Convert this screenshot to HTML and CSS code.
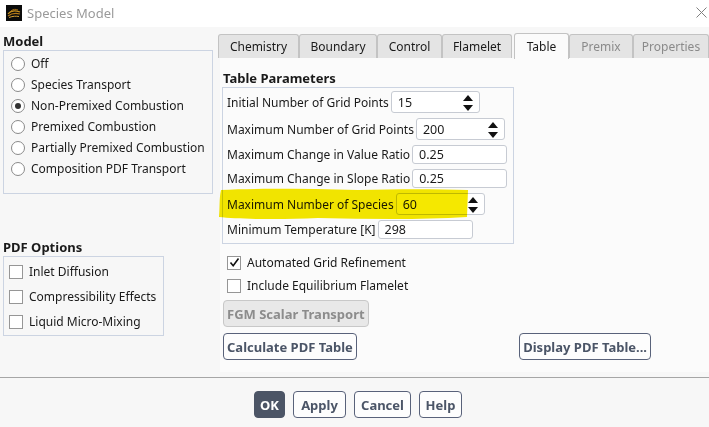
FILE: index.html
```html
<!DOCTYPE html>
<html>
<head>
<meta charset="utf-8">
<title>Species Model</title>
<link rel="stylesheet" href="styles.css">
</head>
<body>
<div class="window">
  <div class="titlebar">
    <svg class="app-icon" width="16" height="16" viewBox="0 0 16 16">
      <rect width="16" height="16" fill="#0b0b0b"/>
      <path d="M2 9 C5 5, 9 5, 14 7" stroke="#c9921f" stroke-width="1.2" fill="none"/>
      <path d="M2 11 C6 8, 10 8, 14 9" stroke="#b57a17" stroke-width="1.2" fill="none"/>
      <path d="M3 12.5 C7 11, 10 11, 13 11.5" stroke="#d4a035" stroke-width="1" fill="none"/>
      <path d="M5 6 C7 4, 10 4, 12 5" stroke="#a66d14" stroke-width="1" fill="none"/>
    </svg>
    <span class="title">Species Model</span>
    <svg class="close" width="11" height="11" viewBox="0 0 11 11">
      <path d="M0.5 0.5 L10.5 10.5 M10.5 0.5 L0.5 10.5" stroke="#808080" stroke-width="1" fill="none"/>
    </svg>
  </div>

  <div class="main">
    <div class="left">
      <div class="group-title">Model</div>
      <div class="box model-box">
        <div class="opt-row"><span class="radio"></span>Off</div>
        <div class="opt-row"><span class="radio"></span>Species Transport</div>
        <div class="opt-row"><span class="radio checked"></span>Non-Premixed Combustion</div>
        <div class="opt-row"><span class="radio"></span>Premixed Combustion</div>
        <div class="opt-row"><span class="radio"></span>Partially Premixed Combustion</div>
        <div class="opt-row"><span class="radio"></span>Composition PDF Transport</div>
      </div>
      <div class="group-title pdf-title">PDF Options</div>
      <div class="box pdf-box">
        <div class="chk-row"><span class="check"></span>Inlet Diffusion</div>
        <div class="chk-row"><span class="check"></span>Compressibility Effects</div>
        <div class="chk-row"><span class="check"></span>Liquid Micro-Mixing</div>
      </div>
    </div>

    <div class="right">
      <div class="tabs">
        <div class="tab t-chem">Chemistry</div>
        <div class="tab t-bound">Boundary</div>
        <div class="tab t-ctrl">Control</div>
        <div class="tab t-flam">Flamelet</div>
        <div class="tab active t-table">Table</div>
        <div class="tab disabled t-premix">Premix</div>
        <div class="tab disabled t-props">Properties</div>
      </div>
      <div class="panel">
        <div class="group-title params-title">Table Parameters</div>
        <div class="box params">
          <div class="param"><span class="plabel">Initial Number of Grid Points</span><span class="field spin">15<span class="arrows"><span class="up"></span><span class="down"></span></span></span></div>
          <div class="param"><span class="plabel">Maximum Number of Grid Points</span><span class="field spin">200<span class="arrows"><span class="up"></span><span class="down"></span></span></span></div>
          <div class="param"><span class="plabel">Maximum Change in Value Ratio</span><span class="field text">0.25</span></div>
          <div class="param"><span class="plabel">Maximum Change in Slope Ratio</span><span class="field text">0.25</span></div>
          <div class="param"><span class="plabel">Maximum Number of Species</span><span class="field spin">60<span class="arrows"><span class="up"></span><span class="down"></span></span></span></div>
          <div class="param"><span class="plabel">Minimum Temperature [K]</span><span class="field text">298</span></div>
          <svg class="highlight" width="252" height="34" viewBox="0 0 252 34" preserveAspectRatio="none">
            <path d="M3 3 C40 1, 90 2, 140 3 C180 2, 220 2, 250 3 L249 30 C200 33, 150 32, 100 31 C60 33, 20 32, 1 30 C2 20, 1 12, 3 3 Z" fill="#f5e800"/>
          </svg>
        </div>
        <div class="chk-row wide first"><span class="check checked"><svg width="11" height="11" viewBox="0 0 11 11"><path d="M1.5 5.5 L4.2 8.8 L9.5 1.5" stroke="#111" stroke-width="1.6" fill="none"/></svg></span>Automated Grid Refinement</div>
        <div class="chk-row wide"><span class="check"></span>Include Equilibrium Flamelet</div>
        <div class="btn disabled fgm">FGM Scalar Transport</div>
        <div class="btn-row">
          <div class="btn">Calculate PDF Table</div>
          <div class="btn">Display PDF Table...</div>
        </div>
      </div>
    </div>
  </div>

  <div class="footer">
    <div class="btn primary w-ok">OK</div>
    <div class="btn w-apply">Apply</div>
    <div class="btn w-cancel">Cancel</div>
    <div class="btn w-help">Help</div>
  </div>
</div>
</body>
</html>
```

FILE: styles.css
```css
* { box-sizing: border-box; }
html, body { margin: 0; padding: 0; }
body {
  font-family: "Noto Sans", "DejaVu Sans", sans-serif;
  font-size: 12px;
  color: #1a1a1a;
  background: #f7f7f7;
}
.window {
  width: 709px;
  height: 427px;
  display: flex;
  flex-direction: column;
  overflow: hidden;
}
.titlebar {
  height: 27px;
  flex: none;
  background: #ffffff;
  display: flex;
  align-items: center;
  padding-left: 6px;
}
.app-icon { flex: none; margin-top: -2px; }
.title {
  margin-left: 5px;
  font-size: 13px;
  color: #9a9a9a;
  margin-top: -2px;
}
.close { margin-left: auto; margin-right: 2px; margin-top: -2px; }

.main {
  height: 350px;
  flex: none;
  display: flex;
}
.left {
  width: 218px;
  flex: none;
  padding-left: 3px;
}
.group-title {
  font-weight: bold;
  font-size: 13px;
  line-height: 16px;
  height: 16px;
  color: #1a1a1a;
}
.left > .group-title:first-child { margin-top: 6px; margin-bottom: 1px; }
.box {
  border: 1px solid #ccd4e2;
}
.model-box {
  width: 210px;
  height: 144px;
  padding-top: 2px;
}
.opt-row {
  height: 21px;
  display: flex;
  align-items: center;
  white-space: nowrap;
}
.radio {
  width: 14px;
  height: 14px;
  border-radius: 50%;
  border: 1px solid #8a8a8a;
  background: #fff;
  margin-left: 7px;
  margin-right: 6px;
  flex: none;
  position: relative;
}
.radio.checked::after {
  content: "";
  position: absolute;
  left: 3px; top: 3px;
  width: 6px; height: 6px;
  border-radius: 50%;
  background: #333;
}
.pdf-title { margin-top: 45px; margin-bottom: 1px; }
.pdf-box {
  width: 161px;
  height: 80px;
  padding-top: 2px;
}
.chk-row {
  height: 25px;
  display: flex;
  align-items: center;
  white-space: nowrap;
}
.check {
  width: 14px;
  height: 14px;
  border: 1px solid #969696;
  background: #fff;
  margin-left: 5px;
  margin-right: 6px;
  flex: none;
  display: flex;
  align-items: center;
  justify-content: center;
}

.right {
  flex: 1;
  display: flex;
  flex-direction: column;
  padding-top: 6px;
}
.tabs {
  display: flex;
  align-items: flex-end;
  height: 25px;
  flex: none;
  position: relative;
  z-index: 1;
}
.tab {
  height: 24px;
  padding: 0;
  display: flex;
  align-items: center;
  justify-content: center;
  font-size: 12px;
  background: #e4e4e4;
  border: 1px solid #c3c3c3;
  border-bottom: none;
  border-radius: 3px 3px 0 0;
  white-space: nowrap;
  color: #1a1a1a;
  flex: none;
}
.t-chem { width: 81px; }
.t-bound { width: 78px; }
.t-ctrl { width: 65px; }
.t-flam { width: 70px; }
.t-table { width: 55px; }
.t-premix { width: 64px; }
.t-props { width: 76px; }
.tab.active {
  height: 26px;
  background: #fbfbfb;
  margin-left: 2px;
  margin-bottom: -1px;
}
.tab.disabled { color: #8a8a8a; }
.panel {
  margin-left: 2px;
  height: 314px;
  background: #fbfbfb;
  padding: 12px 0 0 2px;
}
.params-title { padding-left: 1px; }
.params {
  position: relative;
  width: 292px;
  height: 157px;
  margin-top: 1px;
  padding: 3px 0 0 4px;
  display: flex;
  flex-direction: column;
  gap: 5px;
}
.param {
  display: flex;
  align-items: center;
  white-space: nowrap;
  position: relative;
  z-index: 1;
}
.plabel { margin-right: 2px; }
.field {
  background: #fff;
  border: 1px solid #c7cbd3;
  border-radius: 3px;
  display: flex;
  align-items: center;
  padding-left: 6px;
  font-size: 12.5px;
}
.field.spin { width: 89px; height: 22px; position: relative; }
.field.text { width: 95px; height: 19px; }
.arrows {
  position: absolute;
  right: 6px;
  top: 3px;
  display: flex;
  flex-direction: column;
  gap: 4px;
}
.arrows .up {
  width: 0; height: 0;
  border-left: 5px solid transparent;
  border-right: 5px solid transparent;
  border-bottom: 6px solid #111;
}
.arrows .down {
  width: 0; height: 0;
  border-left: 5px solid transparent;
  border-right: 5px solid transparent;
  border-top: 6px solid #111;
}
.highlight {
  position: absolute;
  left: -5px;
  top: 99px;
  z-index: 2;
  mix-blend-mode: multiply;
  pointer-events: none;
}
.chk-row.wide { height: 23px; }
.chk-row.first { margin-top: 7px; }
.btn {
  height: 27px;
  border: 1px solid #59627a;
  border-radius: 4px;
  padding: 0 3px;
  display: inline-flex;
  align-items: center;
  justify-content: center;
  font-weight: bold;
  font-size: 13px;
  color: #4b5567;
  background: #fdfdfd;
  white-space: nowrap;
}
.btn.disabled {
  color: #8c8c8c;
  background: #e8e8e8;
  border-color: #c8c8c8;
}
.fgm { margin-top: 3px; margin-left: 1px; }
.btn-row {
  margin-top: 6px;
  margin-left: 1px;
  width: 428px;
  display: flex;
  justify-content: space-between;
}
.footer {
  flex: none;
  border-top: 1px solid #a6a6a6;
  height: 50px;
  display: flex;
  justify-content: center;
  align-items: flex-start;
  gap: 8px;
  padding-top: 13px;
  padding-left: 7px;
}
.footer .btn { padding: 0; height: 27px; }
.w-ok { width: 31px; }
.w-apply { width: 53px; }
.w-cancel { width: 57px; }
.w-help { width: 43px; }
.btn.primary {
  background: #4c5566;
  color: #fff;
  border-color: #4c5566;
}
```
